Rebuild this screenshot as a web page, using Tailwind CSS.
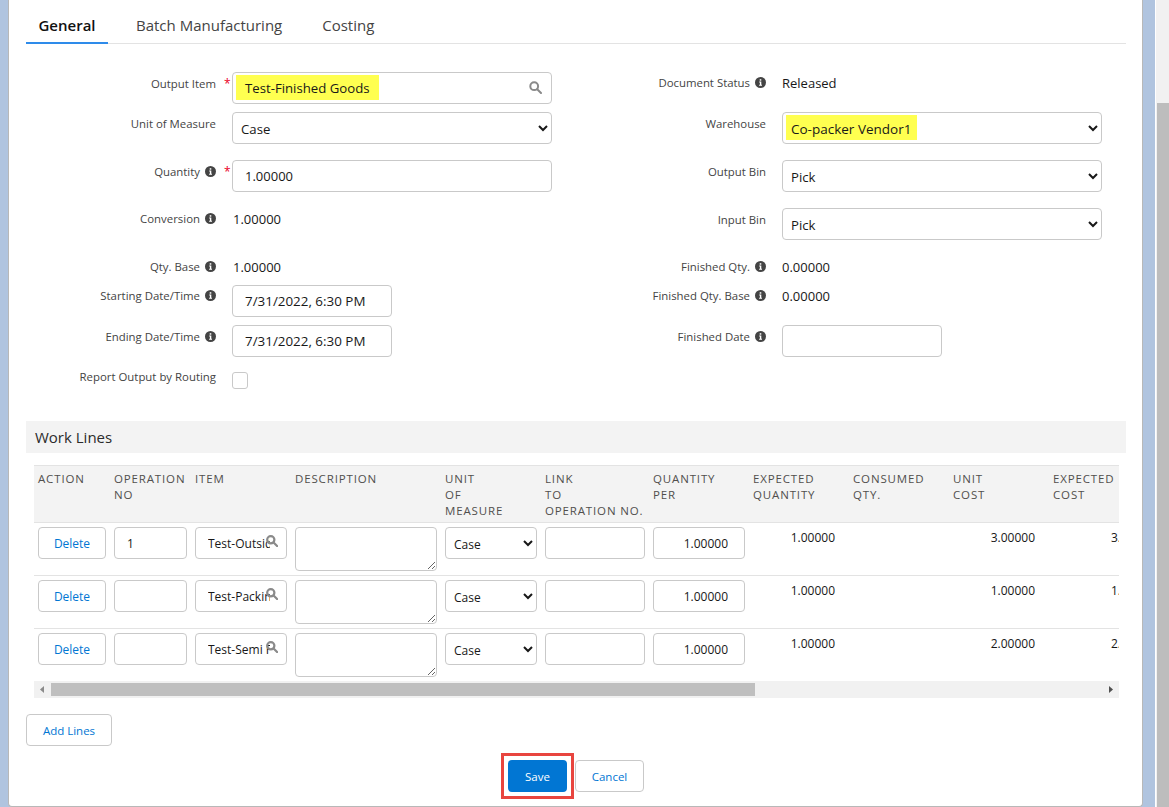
<!doctype html>
<html lang="en">
<head>
<meta charset="utf-8">
<title>Work Order</title>
<script src="https://cdn.jsdelivr.net/npm/@tailwindcss/browser@4"></script>
</head>
<body class="overflow-hidden">
<div class="flex w-[1169px] h-[807px] overflow-hidden bg-[#b0c4df] font-['Open_Sans',sans-serif] text-[13px] text-[#181818]">
  <main class="ml-2 w-[1135px] h-[807px] shrink-0 bg-white border-l border-r border-b border-[#b8b8b8] rounded-b-[4px] pl-[17px] pr-[15px]">
    <nav class="flex gap-4 h-11 border-b border-[#e3e3e3] w-[1100px]">
      <span class="w-[82px] h-11 border-b-2 border-[#2e8bea] text-center text-[15px] font-semibold leading-[50px] text-[#111]">General</span>
      <span class="px-3 text-[15px] leading-[51px] text-[#444]">Batch Manufacturing</span>
      <span class="px-3 text-[15px] leading-[51px] text-[#444]">Costing</span>
    </nav>

    <form class="mt-[28px] grid grid-cols-[550px_550px] grid-rows-[40px_48px_48px_48px_29px_40px_40px_56px] text-[#444] text-[11.4px] leading-4">
      <div class="flex">
        <label class="w-[190px] pt-1 text-right">Output Item</label>
        <span class="w-4 pt-1 pl-2 text-[#ea001e] text-[12px]">*</span>
        <div class="relative w-80 h-8 border border-[#c9c9c9] rounded-[4px] bg-white pl-[3px] pt-[2px]">
          <span class="block w-[143px] h-[25px] bg-[#ffff50] pl-[9px] text-[13.2px] leading-[26px] text-[#181818]">Test-Finished Goods</span>
          <svg class="absolute right-[9px] top-[8px] w-[13px] h-[13px]" viewBox="0 0 13 13" fill="none" stroke="#8a8a8a" stroke-width="2"><circle cx="5.2" cy="5.2" r="3.9"/><path d="M8.2 8.2l3.8 3.8" stroke-linecap="round"/></svg>
        </div>
      </div>
      <div class="flex">
        <label class="w-[174px] pt-[3px] text-right">Document Status</label>
        <svg class="ml-[5px] mt-[5px] w-[11px] h-[11px]" viewBox="0 0 11 11"><circle cx="5.5" cy="5.5" r="5.5" fill="#444"/><rect x="4.7" y="2.2" width="1.6" height="1.5" fill="#fff"/><path d="M4.2 4.6h2.1v3.2h.7v.9H4.1v-.9h.8V5.5h-.7z" fill="#fff"/></svg>
        <span class="ml-4 pt-px text-[13px] leading-5 text-[#181818]">Released</span>
      </div>

      <div class="flex">
        <label class="w-[190px] pt-1 text-right">Unit of Measure</label>
        <span class="w-4"></span>
        <select class="w-80 h-8 border border-[#c9c9c9] rounded-[4px] bg-white pl-1 pt-px text-[13.2px] text-[#181818]"><option>Case</option></select>
      </div>
      <div class="flex">
        <label class="w-[190px] pt-1 text-right">Warehouse</label>
        <span class="w-4"></span>
        <div class="relative w-80 h-8">
          <span class="absolute left-1 top-[3px] w-[131px] h-[25px] bg-[#ffff50]"></span>
          <select class="relative w-80 h-8 border border-[#c9c9c9] rounded-[4px] bg-transparent pl-1 pt-px text-[13.5px] text-[#181818]"><option>Co-packer Vendor1</option></select>
        </div>
      </div>

      <div class="flex">
        <label class="w-[174px] pt-1 text-right">Quantity</label>
        <svg class="ml-[5px] mt-[6px] w-[11px] h-[11px]" viewBox="0 0 11 11"><circle cx="5.5" cy="5.5" r="5.5" fill="#444"/><rect x="4.7" y="2.2" width="1.6" height="1.5" fill="#fff"/><path d="M4.2 4.6h2.1v3.2h.7v.9H4.1v-.9h.8V5.5h-.7z" fill="#fff"/></svg>
        <span class="w-4 pt-1 pl-2 text-[#ea001e] text-[12px]">*</span>
        <input class="w-80 h-8 border border-[#c9c9c9] rounded-[4px] bg-white px-3 text-[13px] text-[#181818]" value="1.00000">
      </div>
      <div class="flex">
        <label class="w-[190px] pt-1 text-right">Output Bin</label>
        <span class="w-4"></span>
        <select class="w-80 h-8 border border-[#c9c9c9] rounded-[4px] bg-white pl-1 pt-px text-[13.2px] text-[#181818]"><option>Pick</option></select>
      </div>

      <div class="flex">
        <label class="w-[174px] pt-[3px] text-right">Conversion</label>
        <svg class="ml-[5px] mt-[5px] w-[11px] h-[11px]" viewBox="0 0 11 11"><circle cx="5.5" cy="5.5" r="5.5" fill="#444"/><rect x="4.7" y="2.2" width="1.6" height="1.5" fill="#fff"/><path d="M4.2 4.6h2.1v3.2h.7v.9H4.1v-.9h.8V5.5h-.7z" fill="#fff"/></svg>
        <span class="ml-[17px] pt-px text-[13px] leading-5 text-[#181818]">1.00000</span>
      </div>
      <div class="flex">
        <label class="w-[190px] pt-1 text-right">Input Bin</label>
        <span class="w-4"></span>
        <select class="w-80 h-8 border border-[#c9c9c9] rounded-[4px] bg-white pl-1 pt-px text-[13.2px] text-[#181818]"><option>Pick</option></select>
      </div>

      <div class="flex">
        <label class="w-[174px] pt-[3px] text-right">Qty. Base</label>
        <svg class="ml-[5px] mt-[5px] w-[11px] h-[11px]" viewBox="0 0 11 11"><circle cx="5.5" cy="5.5" r="5.5" fill="#444"/><rect x="4.7" y="2.2" width="1.6" height="1.5" fill="#fff"/><path d="M4.2 4.6h2.1v3.2h.7v.9H4.1v-.9h.8V5.5h-.7z" fill="#fff"/></svg>
        <span class="ml-[17px] pt-px text-[13px] leading-5 text-[#181818]">1.00000</span>
      </div>
      <div class="flex">
        <label class="w-[174px] pt-[3px] text-right">Finished Qty.</label>
        <svg class="ml-[5px] mt-[5px] w-[11px] h-[11px]" viewBox="0 0 11 11"><circle cx="5.5" cy="5.5" r="5.5" fill="#444"/><rect x="4.7" y="2.2" width="1.6" height="1.5" fill="#fff"/><path d="M4.2 4.6h2.1v3.2h.7v.9H4.1v-.9h.8V5.5h-.7z" fill="#fff"/></svg>
        <span class="ml-4 pt-px text-[13px] leading-5 text-[#181818]">0.00000</span>
      </div>

      <div class="flex">
        <label class="w-[174px] pt-[3px] text-right">Starting Date/Time</label>
        <svg class="ml-[5px] mt-[5px] w-[11px] h-[11px]" viewBox="0 0 11 11"><circle cx="5.5" cy="5.5" r="5.5" fill="#444"/><rect x="4.7" y="2.2" width="1.6" height="1.5" fill="#fff"/><path d="M4.2 4.6h2.1v3.2h.7v.9H4.1v-.9h.8V5.5h-.7z" fill="#fff"/></svg>
        <span class="w-4"></span>
        <input class="w-40 h-8 border border-[#c9c9c9] rounded-[4px] bg-white px-3 text-[13.4px] text-[#181818]" value="7/31/2022, 6:30 PM">
      </div>
      <div class="flex">
        <label class="w-[174px] pt-[3px] text-right">Finished Qty. Base</label>
        <svg class="ml-[5px] mt-[5px] w-[11px] h-[11px]" viewBox="0 0 11 11"><circle cx="5.5" cy="5.5" r="5.5" fill="#444"/><rect x="4.7" y="2.2" width="1.6" height="1.5" fill="#fff"/><path d="M4.2 4.6h2.1v3.2h.7v.9H4.1v-.9h.8V5.5h-.7z" fill="#fff"/></svg>
        <span class="ml-4 pt-px text-[13px] leading-5 text-[#181818]">0.00000</span>
      </div>

      <div class="flex">
        <label class="w-[174px] pt-1 text-right">Ending Date/Time</label>
        <svg class="ml-[5px] mt-[6px] w-[11px] h-[11px]" viewBox="0 0 11 11"><circle cx="5.5" cy="5.5" r="5.5" fill="#444"/><rect x="4.7" y="2.2" width="1.6" height="1.5" fill="#fff"/><path d="M4.2 4.6h2.1v3.2h.7v.9H4.1v-.9h.8V5.5h-.7z" fill="#fff"/></svg>
        <span class="w-4"></span>
        <input class="w-40 h-8 border border-[#c9c9c9] rounded-[4px] bg-white px-3 text-[13.4px] text-[#181818]" value="7/31/2022, 6:30 PM">
      </div>
      <div class="flex">
        <label class="w-[174px] pt-1 text-right">Finished Date</label>
        <svg class="ml-[5px] mt-[6px] w-[11px] h-[11px]" viewBox="0 0 11 11"><circle cx="5.5" cy="5.5" r="5.5" fill="#444"/><rect x="4.7" y="2.2" width="1.6" height="1.5" fill="#fff"/><path d="M4.2 4.6h2.1v3.2h.7v.9H4.1v-.9h.8V5.5h-.7z" fill="#fff"/></svg>
        <span class="w-4"></span>
        <input class="w-40 h-8 border border-[#c9c9c9] rounded-[4px] bg-white px-3 text-[13px]" value="">
      </div>

      <div class="flex">
        <label class="w-[190px] pt-1 text-right">Report Output by Routing</label>
        <span class="w-4"></span>
        <span class="mt-[7px] w-4 h-[17px] border border-[#c9c9c9] rounded-[3px] bg-white"></span>
      </div>
      <div></div>
    </form>

    <h2 class="w-[1100px] h-8 bg-[#f3f3f3] pl-[9px] text-[15px] leading-[33px] text-[#2b2b2b]">Work Lines</h2>

    <section class="mt-3 ml-2 w-[1085px] overflow-hidden">
      <div class="grid grid-cols-[76px_81px_100px_150px_100px_108px_100px_100px_100px_100px_100px] h-[58px] w-[1120px] bg-[#f3f3f3] border-t border-b border-[#e3e3e3] pl-1 pt-[5px] text-[11.5px] leading-4 tracking-[0.85px] text-[#514f4d] uppercase">
        <span>Action</span>
        <span>Operation<br>No</span>
        <span>Item</span>
        <span>Description</span>
        <span>Unit<br>of<br>Measure</span>
        <span class="whitespace-nowrap">Link<br>to<br>Operation No.</span>
        <span>Quantity<br>Per</span>
        <span>Expected<br>Quantity</span>
        <span>Consumed<br>Qty.</span>
        <span>Unit<br>Cost</span>
        <span>Expected<br>Cost</span>
      </div>

      <div class="grid grid-cols-[76px_81px_100px_150px_100px_108px_100px_100px_100px_100px_100px] h-[53px] w-[1120px] border-b border-[#e3e3e3] pl-1 pt-1 text-[12px] leading-5">
        <span class="w-[68px] h-8 border border-[#c9c9c9] rounded-[4px] text-center leading-[32px] text-[#0176d3]">Delete</span>
        <input class="w-[73px] h-8 border border-[#c9c9c9] rounded-[4px] px-3 pt-px" value="1">
        <div class="relative w-[92px] h-8"><input class="w-[92px] h-8 border border-[#c9c9c9] rounded-[4px] pl-3 pr-[16px]" value="Test-Outside Process"><svg class="absolute left-[71px] top-[8px] w-3 h-3" viewBox="0 0 13 13" fill="none" stroke="#8a8a8a" stroke-width="2.4"><circle cx="5.2" cy="5.2" r="3.9"/><path d="M8.2 8.2l3.8 3.8" stroke-linecap="round"/></svg></div>
        <textarea class="block w-[142px] h-11 border border-[#c9c9c9] rounded-[4px]"></textarea>
        <select class="w-[92px] h-8 border border-[#c9c9c9] rounded-[4px] bg-white pl-1 pt-[2px] text-[12px]"><option>Case</option></select>
        <input class="w-[100px] h-8 border border-[#c9c9c9] rounded-[4px] px-3" value="">
        <input class="w-[92px] h-8 border border-[#c9c9c9] rounded-[4px] px-3 pr-4 pt-px text-right" value="1.00000">
        <span class="w-[82px] pt-px text-right">1.00000</span>
        <span></span>
        <span class="w-[82px] pt-px text-right">3.00000</span>
        <span class="pl-[58px] pt-px">3.00000</span>
      </div>

      <div class="grid grid-cols-[76px_81px_100px_150px_100px_108px_100px_100px_100px_100px_100px] h-[53px] w-[1120px] border-b border-[#e3e3e3] pl-1 pt-1 text-[12px] leading-5">
        <span class="w-[68px] h-8 border border-[#c9c9c9] rounded-[4px] text-center leading-[32px] text-[#0176d3]">Delete</span>
        <input class="w-[73px] h-8 border border-[#c9c9c9] rounded-[4px] px-3 pt-px" value="">
        <div class="relative w-[92px] h-8"><input class="w-[92px] h-8 border border-[#c9c9c9] rounded-[4px] pl-3 pr-[16px]" value="Test-Packing Material"><svg class="absolute left-[71px] top-[8px] w-3 h-3" viewBox="0 0 13 13" fill="none" stroke="#8a8a8a" stroke-width="2.4"><circle cx="5.2" cy="5.2" r="3.9"/><path d="M8.2 8.2l3.8 3.8" stroke-linecap="round"/></svg></div>
        <textarea class="block w-[142px] h-11 border border-[#c9c9c9] rounded-[4px]"></textarea>
        <select class="w-[92px] h-8 border border-[#c9c9c9] rounded-[4px] bg-white pl-1 pt-[2px] text-[12px]"><option>Case</option></select>
        <input class="w-[100px] h-8 border border-[#c9c9c9] rounded-[4px] px-3" value="">
        <input class="w-[92px] h-8 border border-[#c9c9c9] rounded-[4px] px-3 pr-4 pt-px text-right" value="1.00000">
        <span class="w-[82px] pt-px text-right">1.00000</span>
        <span></span>
        <span class="w-[82px] pt-px text-right">1.00000</span>
        <span class="pl-[58px] pt-px">1.00000</span>
      </div>

      <div class="grid grid-cols-[76px_81px_100px_150px_100px_108px_100px_100px_100px_100px_100px] h-[52px] w-[1120px] pl-1 pt-1 text-[12px] leading-5">
        <span class="w-[68px] h-8 border border-[#c9c9c9] rounded-[4px] text-center leading-[32px] text-[#0176d3]">Delete</span>
        <input class="w-[73px] h-8 border border-[#c9c9c9] rounded-[4px] px-3 pt-px" value="">
        <div class="relative w-[92px] h-8"><input class="w-[92px] h-8 border border-[#c9c9c9] rounded-[4px] pl-3 pr-[16px]" value="Test-Semi Finished"><svg class="absolute left-[71px] top-[8px] w-3 h-3" viewBox="0 0 13 13" fill="none" stroke="#8a8a8a" stroke-width="2.4"><circle cx="5.2" cy="5.2" r="3.9"/><path d="M8.2 8.2l3.8 3.8" stroke-linecap="round"/></svg></div>
        <textarea class="block w-[142px] h-11 border border-[#c9c9c9] rounded-[4px]"></textarea>
        <select class="w-[92px] h-8 border border-[#c9c9c9] rounded-[4px] bg-white pl-1 pt-[2px] text-[12px]"><option>Case</option></select>
        <input class="w-[100px] h-8 border border-[#c9c9c9] rounded-[4px] px-3" value="">
        <input class="w-[92px] h-8 border border-[#c9c9c9] rounded-[4px] px-3 pr-4 pt-px text-right" value="1.00000">
        <span class="w-[82px] pt-px text-right">1.00000</span>
        <span></span>
        <span class="w-[82px] pt-px text-right">2.00000</span>
        <span class="pl-[58px] pt-px">2.00000</span>
      </div>

      <div class="flex items-center h-[17px] bg-[#f1f1f1]">
        <svg class="ml-1 w-[9px] h-[9px] shrink-0" viewBox="0 0 9 9"><path d="M6 1L2 4.5 6 8z" fill="#8a8a8a"/></svg>
        <div class="ml-1 w-[704px] h-[13px] bg-[#bfbfbf]"></div>
        <svg class="ml-auto mr-[4px] w-[9px] h-[9px] shrink-0" viewBox="0 0 9 9"><path d="M3 1l4 3.5L3 8z" fill="#505050"/></svg>
      </div>
    </section>

    <button class="mt-[16px] block w-[86px] h-8 border border-[#c9c9c9] rounded-[4px] bg-white pt-[2px] text-[11.5px] text-[#0176d3]">Add Lines</button>

    <div class="mt-[14px] w-[1100px] flex justify-center gap-2">
      <div class="relative">
        <button class="block w-[59px] h-8 rounded-[4px] bg-[#0176d3] pt-px text-[11.5px] font-medium text-white">Save</button>
        <span class="absolute -inset-[7px] border-3 border-[#e8453f]"></span>
      </div>
      <button class="w-[69px] h-8 border border-[#c9c9c9] rounded-[4px] bg-white pt-px text-[11.5px] text-[#0176d3]">Cancel</button>
    </div>
  </main>

  <aside class="ml-3 flex flex-col w-[14px] h-[807px] border-l border-white bg-[#f1f1f1] pl-px">
    <div class="h-[103px] shrink-0"></div>
    <div class="flex-1 bg-[#bdbdbd]"></div>
  </aside>
</div>
</body>
</html>
